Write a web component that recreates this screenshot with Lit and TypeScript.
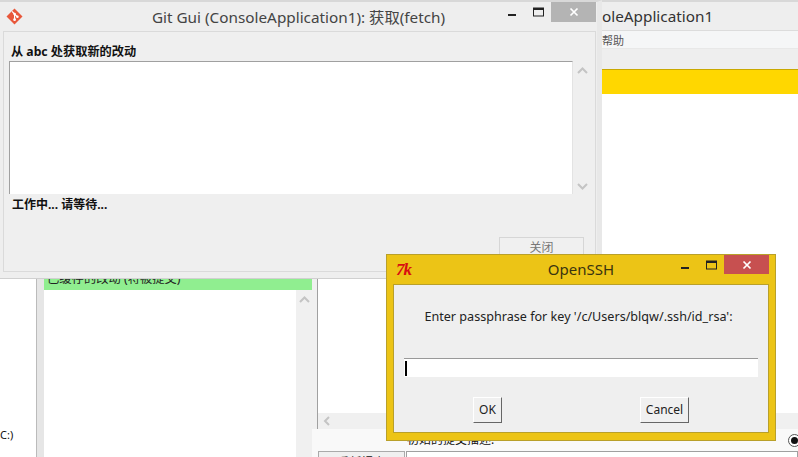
import { LitElement, html, css } from "lit";
import { customElement } from "lit/decorators.js";

@customElement("app-root")
export class AppRoot extends LitElement {
  static styles = css`
    :host { display: block; width: 798px; height: 457px; position: relative; overflow: hidden; background: #fff;
      font-family: "Noto Sans", "Noto Sans CJK SC", sans-serif; color: #111; }
    * { box-sizing: border-box; }
    .back { position: absolute; inset: 0; display: flex; flex-direction: column; }
    .back-title { height: 31px; background: #eeeeee; flex: none; font-size: 15.3px; color: #333; line-height: 29px; padding-left: 602px; white-space: nowrap; border-top: 2px solid #d8d8d8; border-bottom: 1px solid #dcdcdc; }
    .back-menu { height: 18px; flex: none; background: #f5f6f7; border-bottom: 1px solid #e8e8e8; font-size: 11px; line-height: 20px; padding-left: 602px; color: #555; }
    .back-tool { height: 21px; flex: none; background: #eeeeee; border-bottom: 1px solid #c9a800; }
    .yellow { height: 24px; flex: none; background: #ffd700; }
    .back-body { flex: 1; display: flex; min-height: 0; background: #fff; }
    .nav { width: 36px; flex: none; position: relative; font-size: 11px; display: flex; align-items: flex-end; padding-bottom: 15px; }
    .splitter { width: 8px; flex: none; background: #e6e6e6; border-left: 1px solid #bbb; }
    .list { width: 268px; flex: none; display: flex; flex-direction: column; }
    .list-head { margin-top: 178px; height: 18px; background: #90ee90; flex: none; font-size: 12.3px; line-height: 14px; padding-left: 3px; overflow: hidden; color: #222; white-space: nowrap; }
    .list-main { flex: 1; display: flex; justify-content: flex-end; }
    .vbar { width: 16px; background: #f0f0f0; display: flex; justify-content: center; padding-top: 6px; }
    .gap { width: 6px; flex: none; background: #f9f9f9; }
    .gap-top { height: 335px; background: #f0f0f0; border-right: 1px solid #a0a0a0; }
    .right { flex: 1; display: flex; flex-direction: column; min-width: 0; }
    .diff { height: 319px; flex: none; }
    .hbar { height: 16px; flex: none; background: #f0f0f0; padding: 3px 0 0 5px; display: flex; }
    .commit-area { flex: 1; background: #f9f9f9; position: relative; }
    .commit-label { position: absolute; left: 89px; top: 4px; font-size: 12px; line-height: 14px; white-space: nowrap; }
    .radio { position: absolute; left: 470px; top: 5px; width: 13px; height: 13px; border-radius: 50%; background: #fff; border: 1px solid #555; display: flex; align-items: center; justify-content: center; }
    .radio::after { content: ""; width: 7px; height: 7px; border-radius: 50%; background: #111; }
    .commit-row { position: absolute; left: 0; top: 22px; right: 0; height: 6px; display: flex; gap: 1px; }
    .amend { width: 87px; height: 6px; background: #f0f0f0; border: 1px solid #aaa; border-bottom: none; font-size: 12px; line-height: 14px; padding-top: 4px; text-align: center; overflow: hidden; }
    .msg { flex: 1; background: #fff; border: 1px solid #a0a0a0; border-bottom: none; }

    .win { position: absolute; display: flex; flex-direction: column; }
    .git { left: 0; top: 0; width: 602px; height: 279px; background: #eeeeee; border-top: 2px solid #d8d8d8; border-right: 5px solid #e8e8e8; border-bottom: 1px solid #d0d0d0; }
    .git-title { height: 29px; flex: none; display: flex; align-items: center; justify-content: center; position: relative; font-size: 15.3px; color: #444; padding-bottom: 2px; }
    .git-logo { position: absolute; left: 6px; top: 6px; }
    .controls { position: absolute; top: 0; right: 0; display: flex; align-items: flex-start; }
    .ctl { display: flex; align-items: center; justify-content: center; }
    .git .close { width: 45px; height: 20px; background: #b4b4b4; }
    .git .ctl-w { width: 26px; height: 20px; }
    .git .controls { right: 1px; }
    .client { flex: 1; margin: 0 1px 6px 3px; background: #efefef; border: 1px solid #dadada; padding: 10px 5px 0 5px; display: flex; flex-direction: column; min-height: 0; }
    .label { font-size: 12.2px; font-weight: 700; line-height: 19px; height: 19px; padding-left: 2px; white-space: nowrap; color: #111; }
    .log { display: flex; height: 133px; flex: none; }
    .log-text { width: 564px; flex: none; background: #fff; border-top: 1px solid #a0a0a0; border-left: 1px solid #a0a0a0; border-right: 1px solid #e3e3e3; }
    .log-bar { width: 18px; flex: none; display: flex; flex-direction: column; justify-content: space-between; align-items: center; padding: 6px 0 4px; }
    .status { font-size: 12px; font-weight: 700; line-height: 22px; padding-left: 3px; white-space: nowrap; color: #111; }
    .foot { flex: 1; position: relative; }
    .close-btn { position: absolute; right: 6px; top: 21px; width: 85px; height: 24px; border: 1px solid #d6d6d6; background: #f0f0f0; color: #777; font-size: 12px; text-align: center; line-height: 20px; }

    .dlg { left: 386px; top: 254px; width: 390px; height: 187px; background: #ecc416; border: 1px solid #b9a02a; }
    .dlg-title { height: 29px; flex: none; position: relative; display: flex; align-items: center; justify-content: center; font-size: 15px; color: #3a3410; padding-bottom: 1px; }
    .tk { position: absolute; left: 9px; top: 6px; font: italic 700 17px/18px "Liberation Serif", serif; color: #d81010; letter-spacing: -1px; }
    .dlg .controls { right: 6px; top: 0; }
    .dlg .close { width: 45px; height: 19px; background: #c75050; }
    .dlg .ctl-w { width: 26px; height: 19px; }
    .dlg-client { flex: 1; margin: 0 6px 7px 6px; background: #efefef; border: 1px solid #b9a02a; display: flex; flex-direction: column; align-items: center; padding: 23px 10px 0; font-size: 12.6px; color: #222; min-height: 0; }
    .prompt { line-height: 18px; white-space: nowrap; margin-right: 5px; }
    .entry { align-self: stretch; height: 19px; margin-top: 32px; background: #fff; border-top: 1px solid #999; display: flex; align-items: center; padding-left: 1px; }
    .caret { width: 2px; height: 15px; background: #000; }
    .btns { align-self: stretch; display: flex; margin-top: 20px; padding-left: 69px; gap: 138px; }
    .btn { height: 26px; background: #f0f0f0; border: 1px solid #fff; border-right-color: #666; border-bottom-color: #666; font-size: 12px; color: #222; display: flex; align-items: center; justify-content: center; padding-bottom: 2px; }
    .ok { width: 29px; }
    .cancel { width: 49px; }
  `;

  private chev(up: boolean, color = "#c4c4c4") {
    return html`<svg width="11" height="7" viewBox="0 0 11 7"><path d=${up ? "M1 6 L5.5 1.5 L10 6" : "M1 1 L5.5 5.5 L10 1"} fill="none" stroke=${color} stroke-width="2"/></svg>`;
  }

  render() {
    return html`
      <div class="back">
        <div class="back-title">oleApplication1</div>
        <div class="back-menu">帮助</div>
        <div class="back-tool"></div>
        <div class="yellow"></div>
        <div class="back-body">
          <div class="nav">C:)</div>
          <div class="splitter"></div>
          <div class="list">
            <div class="list-head">已缓存的改动 (将被提交)</div>
            <div class="list-main"><div class="vbar">${this.chev(true)}</div></div>
          </div>
          <div class="gap"><div class="gap-top"></div></div>
          <div class="right">
            <div class="diff"></div>
            <div class="hbar"><svg width="7" height="10" viewBox="0 0 7 10"><path d="M6 1 L2 5 L6 9" fill="none" stroke="#c4c4c4" stroke-width="2"/></svg></div>
            <div class="commit-area">
              <div class="commit-label">初始的提交描述:</div>
              <div class="radio"></div>
              <div class="commit-row"><div class="amend">重新提交</div><div class="msg"></div></div>
            </div>
          </div>
        </div>
      </div>

      <div class="win git">
        <div class="git-title">
          <svg class="git-logo" width="17" height="17" viewBox="0 0 17 17">
            <path d="M8.5 .5 L16.5 8.5 L8.5 16.5 L.5 8.5 Z" fill="#e8573a"/>
            <path d="M6 3.4 L8.6 6 M8.6 6 V11.5 M8.6 6 L11.4 8.8" stroke="#fff" stroke-width="1.2" fill="none"/>
            <circle cx="8.6" cy="6" r="1.3" fill="#fff"/><circle cx="8.6" cy="11.7" r="1.4" fill="#fff"/><circle cx="11.4" cy="8.8" r="1.3" fill="#fff"/>
          </svg>
          Git Gui (ConsoleApplication1): 获取(fetch)
          <div class="controls">
            <div class="ctl ctl-w"><svg width="10" height="10" viewBox="0 0 10 10"><rect x="1" y="7" width="8" height="2" fill="#222"/></svg></div>
            <div class="ctl ctl-w"><svg width="11" height="10" viewBox="0 0 11 10"><rect x=".5" y="1" width="10" height="8" fill="none" stroke="#222"/><rect x="0" y="1" width="11" height="2" fill="#222"/></svg></div>
            <div class="ctl close"><svg width="10" height="10" viewBox="0 0 10 10"><path d="M1.5 1.5 L8.5 8.5 M8.5 1.5 L1.5 8.5" stroke="#fff" stroke-width="1.7"/></svg></div>
          </div>
        </div>
        <div class="client">
          <div class="label">从 abc 处获取新的改动</div>
          <div class="log">
            <div class="log-text"></div>
            <div class="log-bar">${this.chev(true)}${this.chev(false)}</div>
          </div>
          <div class="status">工作中... 请等待...</div>
          <div class="foot"><div class="close-btn">关闭</div></div>
        </div>
      </div>

      <div class="win dlg">
        <div class="dlg-title">
          <span class="tk">7k</span>
          OpenSSH
          <div class="controls">
            <div class="ctl ctl-w"><svg width="10" height="10" viewBox="0 0 10 10"><rect x="1" y="7" width="8" height="2" fill="#222"/></svg></div>
            <div class="ctl ctl-w"><svg width="11" height="10" viewBox="0 0 11 10"><rect x=".5" y="1" width="10" height="8" fill="none" stroke="#222"/><rect x="0" y="1" width="11" height="2" fill="#222"/></svg></div>
            <div class="ctl close"><svg width="10" height="10" viewBox="0 0 10 10"><path d="M1.5 1.5 L8.5 8.5 M8.5 1.5 L1.5 8.5" stroke="#fff" stroke-width="1.7"/></svg></div>
          </div>
        </div>
        <div class="dlg-client">
          <div class="prompt">Enter passphrase for key '/c/Users/blqw/.ssh/id_rsa':</div>
          <div class="entry"><div class="caret"></div></div>
          <div class="btns"><div class="btn ok">OK</div><div class="btn cancel">Cancel</div></div>
        </div>
      </div>
    `;
  }
}
